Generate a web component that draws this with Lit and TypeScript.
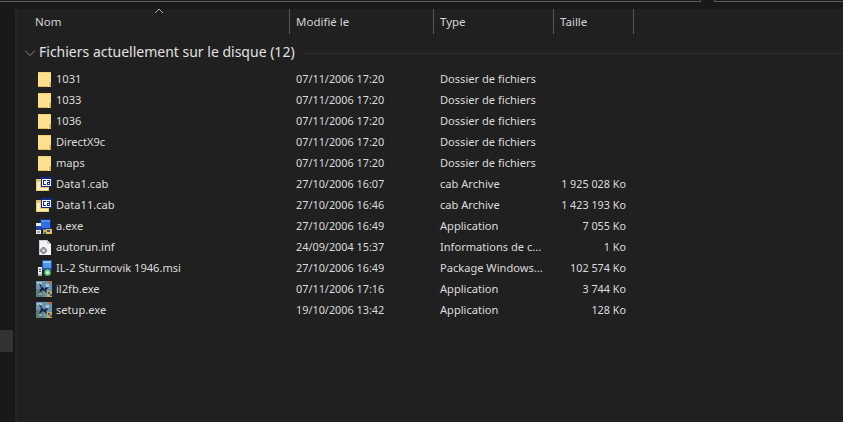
import { LitElement, html, css, svg } from "lit";
import { customElement } from "lit/decorators.js";

type Ico = "folder" | "cab" | "exe" | "inf" | "msi" | "plane";
const rows: [Ico, string, string, string, string][] = [
  ["folder", "1031", "07/11/2006 17:20", "Dossier de fichiers", ""],
  ["folder", "1033", "07/11/2006 17:20", "Dossier de fichiers", ""],
  ["folder", "1036", "07/11/2006 17:20", "Dossier de fichiers", ""],
  ["folder", "DirectX9c", "07/11/2006 17:20", "Dossier de fichiers", ""],
  ["folder", "maps", "07/11/2006 17:20", "Dossier de fichiers", ""],
  ["cab", "Data1.cab", "27/10/2006 16:07", "cab Archive", "1 925 028 Ko"],
  ["cab", "Data11.cab", "27/10/2006 16:46", "cab Archive", "1 423 193 Ko"],
  ["exe", "a.exe", "27/10/2006 16:49", "Application", "7 055 Ko"],
  ["inf", "autorun.inf", "24/09/2004 15:37", "Informations de c...", "1 Ko"],
  ["msi", "IL-2 Sturmovik 1946.msi", "27/10/2006 16:49", "Package Windows...", "102 574 Ko"],
  ["plane", "il2fb.exe", "07/11/2006 17:16", "Application", "3 744 Ko"],
  ["plane", "setup.exe", "19/10/2006 13:42", "Application", "128 Ko"],
];

const icons: Record<Ico, unknown> = {
  folder: svg`<path d="M2 1h13v15h-13z" fill="#fbe08d"/><path d="M2 1h13v1h-13z" fill="#f3cf6f"/><path d="M2 15h13v1h-13z" fill="#e6bd55"/><path d="M13 11h2v5h-2z" fill="#e2b64c"/><path d="M12 11h1v5h-1z" fill="#fff0b8"/>`,
  cab: svg`<path d="M0 3h5v2h-5z" fill="#e4c065"/><path d="M0 5h13v10h-13z" fill="#eccb73"/><path d="M1 6h3v8h-3z" fill="#fbeeb8"/><path d="M1 12h11v2h-11z" fill="#fbeeb8"/><path d="M5 1h11v10h-11z" fill="#152a86"/><path d="M6 3h9v7h-9z" fill="#f5f7fc"/><path d="M7 4h3v1h-2v3h2v1h-3zM11 4h3v5h-3v-3h2v-1h-2zM12 7v1h1v-1z" fill="#1a2f8c"/>`,
  exe: svg`<path d="M4 1h11v11h-11z" fill="#17308a"/><path d="M5 2h9v8h-9z" fill="#2f6fe0"/><path d="M5 2h9v2h-9z" fill="#4f8cf0"/><path d="M0 5h5v11h-5z" fill="#e8ecf2"/><path d="M0 8h5v4h-5z" fill="#2540a8"/><path d="M1 13h3v2h-3z" fill="#9aa3b2"/><path d="M7 11h5v2h-5z" fill="#6f7c8f"/><path d="M7 12h4v4h-4z" fill="#c9a94a"/><path d="M10 11h6v5h-6z" fill="#e0c05a"/><path d="M11 12h3v2h-3z" fill="#2c4c92"/><path d="M8 14h2v2h-2z" fill="#47638f"/>`,
  inf: svg`<path d="M3 1h8l4 4v11h-12z" fill="#f2f3f5"/><path d="M11 1v4h4z" fill="#bfc3c9"/><path d="M3 1h8v1h-8zM3 1h1v15h-1z" fill="#c9ccd2"/><path d="M6 8h3v2h2v3h-2v2h-3v-2h-2v-3h2z" fill="#8b8f96"/><path d="M5 9h1v1h-1zM9 9h1v1h-1zM5 13h1v1h-1zM9 13h1v1h-1z" fill="#a5a9af"/><circle cx="7.500" cy="11.500" r="1.300" fill="#e8e9eb"/>`,
  msi: svg`<path d="M6 0h10v10h-10z" fill="#2a4ea8"/><path d="M7 1h8v7h-8z" fill="#4f9ae8"/><path d="M7 1h8v2h-8z" fill="#8ec4f4"/><path d="M9 10h5v1h-5z" fill="#8a93a0"/><path d="M2 7h4v9h-4z" fill="#e8ebef"/><path d="M3 9h2v1h-2zM3 11h2v1h-2z" fill="#3b4a60"/><path d="M2 14h4v2h-4z" fill="#a9b0ba"/><circle cx="11.500" cy="12.500" r="3.500" fill="#3fae62"/><circle cx="11.500" cy="12.500" r="2.200" fill="#9fd9ae"/><circle cx="11.500" cy="12.500" r="1" fill="#f4f7f5"/>`,
  plane: svg`<path d="M0 0h16v16h-16z" fill="#6b93ab"/><path d="M0 8h7v8h-7z" fill="#5d7d78"/><path d="M1 1h5v2h-5zM10 3h3v3h-3z" fill="#a8c6d6"/><path d="M12 0h4v2h-4z" fill="#b56a4c"/><path d="M11 10h5v6h-5z" fill="#c8a84e"/><path d="M12 11h2v2h-2zM14 13h2v2h-2z" fill="#3d5a82"/><path d="M3 2l5 5 5-1-3 3 1 3-4-3-4 3 2-5z" fill="#14213f"/><path d="M5 5l4 3" stroke="#4a78c8"/><path d="M3 13h3" stroke="#c9d4d8"/>`,
};

@customElement("app-root")
export class AppRoot extends LitElement {
  static styles = css`
    :host {
      display: block;
      width: 843px;
      height: 422px;
      overflow: hidden;
      background: #202020;
      font-family: "Noto Sans", "Open Sans", sans-serif;
      color: #e6e6e6;
    }
    .top {
      height: 9px;
      background: #191919;
      display: flex;
      gap: 13px;
    }
    .box {
      height: 2px;
      box-sizing: border-box;
      border-bottom: 1px solid #5c5c5c;
    }
    .box.addr { width: 701px; border-right: 1px solid #5c5c5c; }
    .box.search { flex: 1; border-left: 1px solid #5c5c5c; }
    .body {
      display: flex;
      height: 413px;
    }
    .side {
      width: 15px;
      background: #191919;
      border-right: 2px solid #252525;
      padding-top: 321px;
    }
    .sel {
      width: 13px;
      height: 22px;
      background: #333333;
    }
    .main { flex: 1; min-width: 0; }
    .cols {
      display: grid;
      grid-template-columns: 273px 144px 120px 80px;
    }
    .head { height: 25px; }
    .th {
      font-size: 11.5px;
      line-height: 25px;
      color: #d4d4d4;
      padding-left: 6px;
      border-right: 1px solid #5a5a5a;
      position: relative;
      box-sizing: border-box;
    }
    .th:first-child { padding-left: 18px; }
    .caret {
      position: absolute;
      left: 137px;
      top: -1px;
      width: 10px;
      height: 6px;
    }
    .group {
      margin-top: 6px;
      height: 26px;
      display: flex;
      align-items: center;
      padding-left: 8px;
    }
    .chev { width: 10px; height: 6px; margin-right: 4px; flex: none; }
    .gt {
      font-size: 14px;
      line-height: 24px;
      margin-top: -2px;
      color: #e2e2e2;
      white-space: nowrap;
    }
    .rule { flex: 1; height: 1px; background: #2e2e2e; margin-left: 7px; }
    .list { padding-top: 2px; }
    .row { height: 21px; align-items: center; font-size: 11.1px; color: #dcdcdc; }
    .name { display: flex; align-items: center; gap: 4px; padding-left: 19px; white-space: nowrap; }
    .name svg { width: 16px; height: 16px; flex: none; }
    .cell { padding-left: 6px; white-space: nowrap; }
    .date { font-size: 10.85px; }
    .size { text-align: right; padding-right: 8px; font-size: 10.8px; }
  `;

  render() {
    return html`
      <div class="top"><div class="box addr"></div><div class="box search"></div></div>
      <div class="body">
        <div class="side"><div class="sel"></div></div>
        <div class="main">
          <div class="cols head">
            <div class="th">Nom
              <svg class="caret" viewBox="0 0 10 6"><path d="M1 5l4-4 4 4" fill="none" stroke="#b0b0b0"/></svg>
            </div>
            <div class="th">Modifié le</div>
            <div class="th">Type</div>
            <div class="th">Taille</div>
          </div>
          <div class="group">
            <svg class="chev" viewBox="0 0 10 6"><path d="M0 .5l5 5 5-5" fill="none" stroke="#8a8a8a"/></svg>
            <span class="gt">Fichiers actuellement sur le disque (12)</span>
            <div class="rule"></div>
          </div>
          <div class="list">
            ${rows.map(
              ([ic, n, d, t, s]) => html`
                <div class="cols row">
                  <div class="name"><svg viewBox="0 0 16 16">${icons[ic]}</svg><span>${n}</span></div>
                  <div class="cell date">${d}</div>
                  <div class="cell">${t}</div>
                  <div class="size">${s}</div>
                </div>
              `
            )}
          </div>
        </div>
      </div>
    `;
  }
}
